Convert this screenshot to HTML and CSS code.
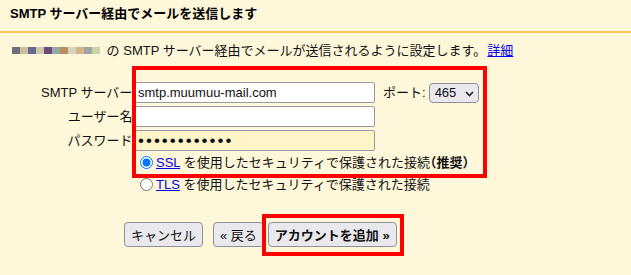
FILE: index.html
```html
<!DOCTYPE html>
<html lang="ja">
<head>
<meta charset="utf-8">
<title>SMTP</title>
<link rel="stylesheet" href="styles.css">
</head>
<body>
<div class="header">SMTP サーバー経由でメールを送信します</div>
<p class="intro"><span class="blur"><i></i><i></i><i></i><i></i><i></i><i></i><i></i><i></i><i></i><i></i><i></i></span> の SMTP サーバー経由でメールが送信されるように設定します。<a href="#">詳細</a></p>
<form class="form">
  <div class="row">
    <label class="lbl">SMTP サーバー:</label>
    <div class="ctl">
      <input class="txt" type="text" value="smtp.muumuu-mail.com">
      <span class="port-lbl">ポート:</span>
      <span class="sel-wrap">
        <select class="sel"><option>465</option></select>
        <svg class="chev" width="9" height="6" viewBox="0 0 9 6"><path d="M1 1l3.5 3.5L8 1" fill="none" stroke="#222" stroke-width="1.6"/></svg>
      </span>
    </div>
  </div>
  <div class="row">
    <label class="lbl">ユーザー名:</label>
    <div class="ctl"><input class="txt" type="text" value=""></div>
  </div>
  <div class="row row-last">
    <label class="lbl">パスワード:</label>
    <div class="ctl"><input class="txt pw" type="password" value="aaaaaaaaaaaa"></div>
  </div>
  <div class="row radio-row">
    <span class="lbl"></span>
    <label class="opt"><input type="radio" name="sec" checked><a href="#">SSL</a> を使用したセキュリティで保護された接続<b class="rec">（推奨）</b></label>
  </div>
  <div class="row radio-row">
    <span class="lbl"></span>
    <label class="opt"><input type="radio" name="sec"><a href="#">TLS</a> を使用したセキュリティで保護された接続</label>
  </div>
  <div class="mark mark-fields"></div>
</form>
<div class="actions">
  <button class="btn btn-cancel" type="button">キャンセル</button>
  <button class="btn btn-back" type="button">« 戻る</button>
  <span class="hl"><button class="btn btn-primary" type="button">アカウントを追加 »</button></span>
</div>
</body>
</html>
```
FILE: styles.css
```css
html, body {
  margin: 0;
  padding: 0;
}
body {
  background: #fef7da;
  font-family: "Liberation Sans", "Noto Sans CJK JP", sans-serif;
  font-size: 13px;
  color: #111;
  width: 631px;
  height: 275px;
  overflow: hidden;
}
.header {
  font-weight: bold;
  line-height: 20px;
  padding: 4px 10px 7px;
  border-bottom: 2px solid #f7c95c;
  color: #000;
}
.intro {
  margin: 8px 0 0;
  padding-left: 12px;
  line-height: 20px;
  white-space: nowrap;
}
.intro a {
  margin-left: 1px;
}
.intro a, .opt a {
  color: #0000ee;
  text-decoration: underline;
}
.blur {
  display: inline-flex;
  vertical-align: middle;
  margin-right: 3px;
  position: relative;
  top: -1px;
}
.blur i {
  display: block;
  width: 8px;
  height: 7px;
}
.blur i:nth-child(1) { background: #6f6f7a; }
.blur i:nth-child(2) { background: #cbbf9c; }
.blur i:nth-child(3) { background: #686894; }
.blur i:nth-child(4) { background: #cdc8a8; }
.blur i:nth-child(5) { background: #654e79; }
.blur i:nth-child(6) { background: #93aaa8; }
.blur i:nth-child(7) { background: #bd8e5d; }
.blur i:nth-child(8) { background: #d2d4bc; }
.blur i:nth-child(9) { background: #d6b48a; }
.blur i:nth-child(10) { background: #9ea6a6; }
.blur i:nth-child(11) { background: #c8d4a8; }

.form {
  position: relative;
  margin-top: 21px;
}
.row {
  display: flex;
  align-items: center;
  height: 21px;
  margin-bottom: 3px;
}
.row-last { margin-bottom: 1px; }
.lbl {
  width: 136px;
  flex: none;
  text-align: right;
  white-space: nowrap;
  line-height: 20px;
}
.ctl {
  display: flex;
  align-items: center;
  margin-left: -1px;
}
.txt {
  box-sizing: border-box;
  width: 240px;
  height: 21px;
  margin: 0;
  padding: 0 2px;
  border: 1px solid #9a9aa6;
  border-radius: 2px;
  background: #fff;
  font-family: "Liberation Sans", "Noto Sans CJK JP", sans-serif;
  font-size: 13px;
  color: #111;
  outline: none;
}
.pw {
  background: #fff5c8;
  font-size: 17px;
  letter-spacing: 2px;
}
.port-lbl {
  margin-left: 8px;
  margin-right: 3px;
  line-height: 20px;
}
.sel-wrap {
  position: relative;
  display: inline-block;
  height: 20px;
}
.sel {
  appearance: none;
  -webkit-appearance: none;
  box-sizing: border-box;
  width: 50px;
  height: 20px;
  margin: 0;
  padding: 0 0 0 5px;
  border: 1px solid #8f8f9d;
  border-radius: 4px;
  background: #e9e9ed;
  font-family: "Liberation Sans", sans-serif;
  font-size: 13px;
  color: #111;
}
.chev {
  position: absolute;
  left: 36px;
  top: 8px;
  pointer-events: none;
}
.radio-row {
  height: 22px;
  margin-bottom: 0;
}
.opt {
  display: block;
  white-space: nowrap;
  line-height: 20px;
  margin-left: -1px;
}
.opt input {
  margin: 0 3px 0 5px;
  width: 13px;
  height: 13px;
  vertical-align: -2px;
}
.rec {
  font-weight: bold;
  font-feature-settings: "halt";
}
.mark {
  position: absolute;
  box-sizing: border-box;
  border: 4px solid #ff0000;
  pointer-events: none;
}
.mark-fields {
  left: 132px;
  top: -16px;
  width: 355px;
  height: 112px;
}
.actions {
  display: flex;
  align-items: center;
  padding-left: 124px;
  margin-top: 26px;
}
.btn {
  box-sizing: border-box;
  height: 25px;
  margin: 0;
  padding: 0 6px;
  border: 1px solid #8f8f9d;
  border-radius: 4px;
  background: #e9e9ed;
  font-family: "Liberation Sans", "Noto Sans CJK JP", sans-serif;
  font-size: 13px;
  color: #111;
  white-space: nowrap;
}
.btn-cancel { margin-right: 10px; }
.btn-back { margin-right: 4px; }
.btn-primary { font-weight: bold; }
.hl {
  position: relative;
  display: inline-flex;
}
.hl::after {
  content: "";
  position: absolute;
  left: -6px;
  right: -7px;
  top: -8px;
  bottom: -9px;
  border: 4px solid #ff0000;
  pointer-events: none;
}
```
